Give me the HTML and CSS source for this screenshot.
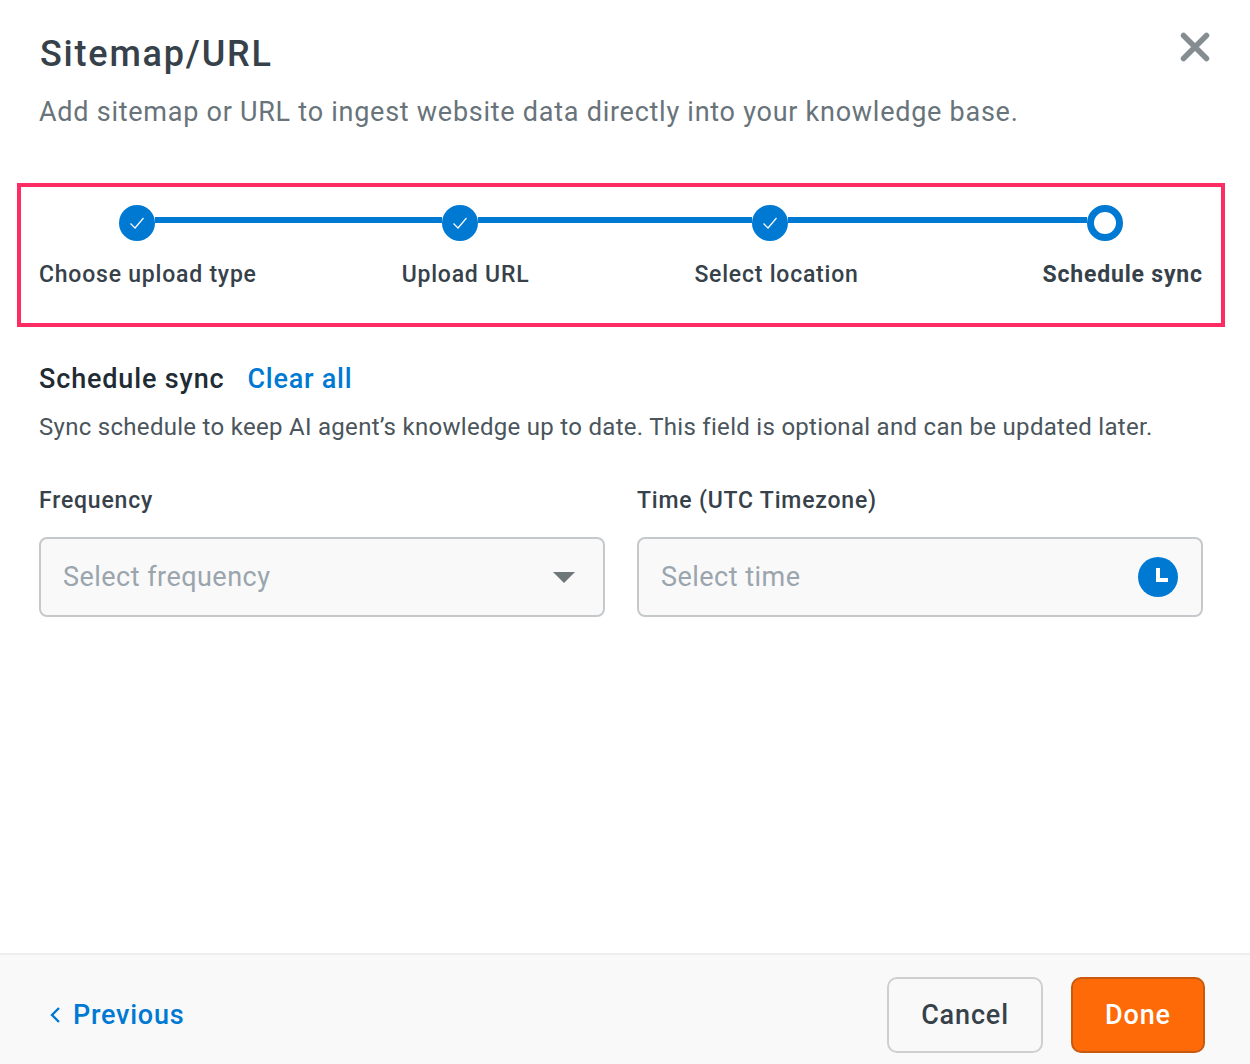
FILE: index.html
```html
<!DOCTYPE html>
<html lang="en">
<head>
<meta charset="utf-8">
<title>Sitemap/URL</title>
<link rel="stylesheet" href="styles.css">
</head>
<body>
<div class="modal">
  <header class="head">
    <div class="head-text">
      <h1 class="title">Sitemap/URL</h1>
      <p class="subtitle">Add sitemap or URL to ingest website data directly into your knowledge base.</p>
    </div>
    <svg class="close" width="30" height="30" viewBox="0 0 30 30"><path d="M3.5 3.5 26.5 26.5M26.5 3.5 3.5 26.5" stroke="#858d91" stroke-width="5.5" stroke-linecap="round" fill="none"/></svg>
  </header>

  <section class="stepper">
    <div class="track">
      <span class="dot"><svg width="16" height="16" viewBox="0 0 16 16"><path d="M1.5 8.5 6 13 14.5 3" stroke="#fff" stroke-width="1.2" fill="none"/></svg></span>
      <span class="bar bar-1"></span>
      <span class="dot"><svg width="16" height="16" viewBox="0 0 16 16"><path d="M1.5 8.5 6 13 14.5 3" stroke="#fff" stroke-width="1.2" fill="none"/></svg></span>
      <span class="bar bar-2"></span>
      <span class="dot"><svg width="16" height="16" viewBox="0 0 16 16"><path d="M1.5 8.5 6 13 14.5 3" stroke="#fff" stroke-width="1.2" fill="none"/></svg></span>
      <span class="bar bar-3"></span>
      <span class="dot dot-current"></span>
    </div>
    <div class="labels">
      <span class="label">Choose upload type</span>
      <span class="label">Upload URL</span>
      <span class="label">Select location</span>
      <span class="label label-current">Schedule sync</span>
    </div>
  </section>

  <section class="sync">
    <div class="sync-head">
      <h2 class="sync-title">Schedule sync</h2>
      <a class="clear">Clear all</a>
    </div>
    <p class="sync-desc">Sync schedule to keep AI agent’s knowledge up to date. This field is optional and can be updated later.</p>
    <div class="fields">
      <div class="field">
        <div class="field-label">Frequency</div>
        <div class="input"><span class="placeholder">Select frequency</span><span class="caret"></span></div>
      </div>
      <div class="field">
        <div class="field-label">Time (UTC Timezone)</div>
        <div class="input"><span class="placeholder">Select time</span>
          <svg class="clock" width="40" height="40" viewBox="0 0 40 40"><circle cx="20" cy="20" r="20" fill="#0079d3"/><path d="M18 11h4v10h8v4H18z" fill="#fff"/></svg>
        </div>
      </div>
    </div>
  </section>

  <footer class="foot">
    <a class="prev"><svg width="12" height="20" viewBox="0 0 12 20"><path d="M10 3 3 10l7 7" stroke="#0079d3" stroke-width="2.4" fill="none"/></svg>Previous</a>
    <div class="actions">
      <button class="btn btn-cancel">Cancel</button>
      <button class="btn btn-done">Done</button>
    </div>
  </footer>
</div>
</body>
</html>
```
FILE: styles.css
```css
* { box-sizing: border-box; }
html, body { margin: 0; height: 100%; background: #fff; }
body { font-family: Roboto, "Noto Sans", sans-serif; color: #36414a; }
.modal { width: 1250px; height: 1064px; display: flex; flex-direction: column; }

.head { display: flex; justify-content: space-between; padding: 30px 40px 0 39px; height: 183px; }
.title { margin: 0 0 0 1px; font-size: 36px; line-height: 48px; font-weight: 500; letter-spacing: 1.8px; color: #36414a; }
.subtitle { margin: 14px 0 0; font-size: 27px; line-height: 40px; font-weight: 400; letter-spacing: 0.74px; color: #68737a; }
.close { margin-top: 2px; }

.stepper { margin-left: 17px; width: 1208px; height: 144px; border: 4px solid #fd2d63; padding: 18px 0 0 18px; }
.track { display: flex; align-items: flex-start; margin-left: 80px; }
.dot { width: 36px; height: 36px; border-radius: 50%; background: #0079d3; display: flex; align-items: center; justify-content: center; flex: none; }
.dot-current { background: #fff; border: 7px solid #0079d3; }
.bar { height: 6px; margin-top: 12px; background: #0079d3; flex: none; }
.bar-1 { width: 287px; }
.bar-2 { width: 274px; }
.bar-3 { width: 299px; }
.labels { display: flex; margin-top: 18px; }
.label { font-size: 23px; line-height: 32px; font-weight: 500; letter-spacing: 0.78px; color: #36414a; white-space: nowrap; }
.label:nth-child(2) { margin-left: 145px; }
.label:nth-child(3) { margin-left: 165px; }
.label:nth-child(4) { margin-left: 184px; }
.label-current { font-weight: 700; letter-spacing: 0.8px; }

.sync { padding: 34px 47px 0 39px; flex: 1; }
.sync-head { display: flex; align-items: center; gap: 23px; }
.sync-title { margin: 0; font-size: 27px; line-height: 36px; font-weight: 500; color: #212b33; letter-spacing: 0.85px; }
.clear { font-size: 27px; line-height: 36px; font-weight: 500; color: #0079d3; letter-spacing: 0.75px; }
.sync-desc { margin: 13px 0 0; font-size: 24px; line-height: 34px; color: #4a555c; letter-spacing: 0.29px; white-space: nowrap; }
.fields { display: flex; gap: 32px; margin-top: 41px; }
.field { width: 566px; }
.field-label { font-size: 23px; line-height: 32px; font-weight: 500; letter-spacing: 0.8px; color: #36414a; }
.input { margin-top: 20px; height: 80px; border: 2px solid #c6c9cb; border-radius: 8px; background: #f9f9f9; display: flex; align-items: center; justify-content: space-between; padding: 0 23px 0 22px; }
.placeholder { font-size: 27px; letter-spacing: 0.47px; color: #9aa5ad; }
.caret { width: 0; height: 0; border-left: 11px solid transparent; border-right: 11px solid transparent; border-top: 11px solid #6d7679; margin-right: 5px; }

.foot { height: 111px; background: #f9f9f9; border-top: 2px solid #eeeeee; display: flex; align-items: center; justify-content: space-between; padding: 10px 45px 0 49px; }
.prev { display: flex; align-items: center; gap: 12px; font-size: 27px; font-weight: 500; letter-spacing: 0.75px; color: #0079d3; }
.actions { display: flex; gap: 28px; }
.btn { height: 76px; border-radius: 10px; font-family: inherit; font-size: 27px; font-weight: 500; letter-spacing: 0.85px; }
.btn-cancel { width: 156px; background: #f9f9f9; border: 2px solid #cfcfcf; color: #36414a; }
.btn-done { width: 134px; background: #fd6a07; border: 2px solid #c85a10; color: #fff; }
```
